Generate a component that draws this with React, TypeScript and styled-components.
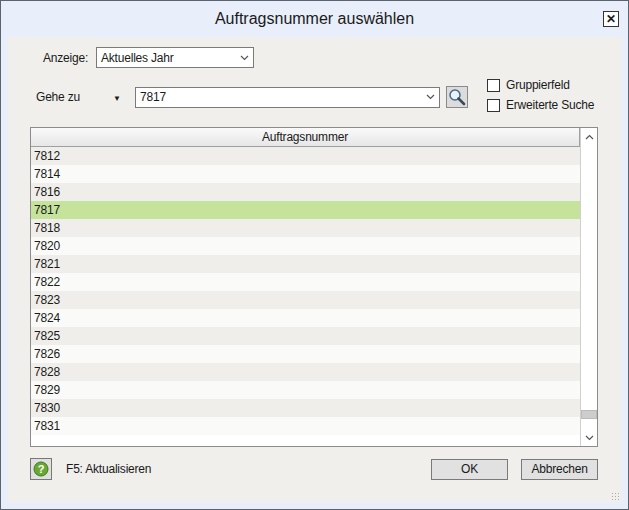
import React from 'react'
import styled, { createGlobalStyle } from 'styled-components'

const Global = createGlobalStyle`
  body { margin: 0; font-family: "Liberation Sans", Arial, sans-serif; font-size: 12px; letter-spacing: -0.2px; color: #1a1a1a; }
`
const Frame = styled.div`
  width: 629px; height: 510px; box-sizing: border-box;
  border: 1px solid #5a6270; background: #e8eefa;
  display: flex; flex-direction: column; padding: 0 7px 7px 7px;
`
const TitleBar = styled.div`
  height: 36px; display: flex; align-items: center; justify-content: center; position: relative;
  font-size: 16px; color: #1a1a1a; letter-spacing: 0;
`
const Close = styled.div`
  position: absolute; right: 2px; top: 10px; width: 14px; height: 14px;
  border: 1px solid #333; background: #fff; font-weight: bold; font-size: 12px;
  display: flex; align-items: center; justify-content: center; line-height: 1;
`
const Body = styled.div`
  flex: 1; background: #f0efec; position: relative;
  display: flex; flex-direction: column; padding: 10px 23px 0 22px;
`
const Row = styled.div<{ $h: number; $mt: number }>`
  display: flex; align-items: center; height: ${p => p.$h}px; margin-top: ${p => p.$mt}px;
`
const Label = styled.span<{ $w: number; $pl: number }>`
  width: ${p => p.$w}px; padding-left: ${p => p.$pl}px; box-sizing: border-box; flex-shrink: 0;
`
const Combo = styled.div<{ $w: number }>`
  width: ${p => p.$w}px; height: 21px; box-sizing: border-box; border: 1px solid #7a7a7a; background: #fff;
  display: flex; align-items: center; justify-content: space-between; padding: 0 4px;
`
const Chev = ({ up }: { up?: boolean }) => (
  <svg width="9" height="6" viewBox="0 0 9 6">
    <path d={up ? 'M1 5 L4.5 1.5 L8 5' : 'M1 1 L4.5 4.5 L8 1'} stroke="#555" strokeWidth="1.2" fill="none" />
  </svg>
)
const SearchBtn = styled.div`
  width: 22px; height: 22px; box-sizing: border-box; border: 1px solid #8a8a8a; background: #dcdcdc;
  margin-left: 6px; display: flex; align-items: center; justify-content: center;
`
const Checks = styled.div`
  display: flex; flex-direction: column; gap: 6px; margin-left: 19px; margin-top: -4px;
`
const Check = styled.label`
  display: flex; align-items: center; gap: 6px;
  &::before { content: ''; width: 11px; height: 11px; border: 1px solid #333; background: #fff; }
`
const Grid = styled.div`
  margin-top: 19px; height: 320px; border: 1px solid #8c8c8c; background: #fff; display: flex; box-sizing: border-box;
`
const Main = styled.div` flex: 1; display: flex; flex-direction: column; `
const Header = styled.div`
  height: 18px; border-bottom: 1px solid #a0a0a0; background: linear-gradient(#fafafa, #e6e6e6);
  display: flex; align-items: center; justify-content: center; border-right: 1px solid #a0a0a0;
`
const Cell = styled.div<{ $alt: boolean; $sel: boolean }>`
  height: 18px; line-height: 18px; padding-left: 3px;
  background: ${p => (p.$sel ? '#c5e39a' : p.$alt ? '#efeeea' : '#fafaf8')};
`
const Scroll = styled.div`
  width: 16px; border-left: 1px solid #d0d0d0; display: flex; flex-direction: column; background: #fff;
`
const ScrollBtn = styled.div`
  height: 17px; display: flex; align-items: center; justify-content: center;
`
const Thumb = styled.div` height: 7px; background: #cdcdcd; border: 1px solid #bbb; `
const Footer = styled.div`
  display: flex; align-items: center; margin-top: 11px; height: 22px;
`
const Help = styled.div`
  width: 22px; height: 22px; box-sizing: border-box; border: 1px solid #777; background: #e0e0e0;
  display: flex; align-items: center; justify-content: center;
`
const Button = styled.div<{ $ml: number }>`
  width: 77px; height: 21px; box-sizing: border-box; border: 1px solid #7a7a7a; background: #e1e1e1;
  display: flex; align-items: center; justify-content: center; margin-left: ${p => p.$ml}px;
`
const Grip = styled.div`
  position: absolute; right: 2px; bottom: 2px; width: 8px; height: 8px;
  background-image: radial-gradient(#aaa 1px, transparent 1px); background-size: 3px 3px;
`

const rows = ['7812', '7814', '7816', '7817', '7818', '7820', '7821', '7822', '7823', '7824', '7825', '7826', '7828', '7829', '7830', '7831']

export default function App() {
  return (
    <>
      <Global />
      <Frame>
        <TitleBar>
          Auftragsnummer auswählen
          <Close>✕</Close>
        </TitleBar>
        <Body>
          <Row $h={21} $mt={0}>
            <Label $w={66} $pl={13}>Anzeige:</Label>
            <Combo $w={158}><span>Aktuelles Jahr</span><Chev /></Combo>
          </Row>
          <Row $h={22} $mt={18}>
            <Label $w={105} $pl={6}>Gehe zu <span style={{ marginLeft: 30, fontSize: 8 }}>▼</span></Label>
            <Combo $w={305}><span>7817</span><Chev /></Combo>
            <SearchBtn>
              <svg width="18" height="18" viewBox="0 0 18 18">
                <circle cx="7" cy="7" r="5" fill="#eaf4fb" stroke="#4a6a8a" strokeWidth="1.5" />
                <path d="M10.5 10.5 L16 16" stroke="#3a4a5a" strokeWidth="2.5" strokeLinecap="round" />
              </svg>
            </SearchBtn>
            <Checks>
              <Check>Gruppierfeld</Check>
              <Check>Erweiterte Suche</Check>
            </Checks>
          </Row>
          <Grid>
            <Main>
              <Header>Auftragsnummer</Header>
              {rows.map((r, i) => (
                <Cell key={r} $alt={i % 2 === 0} $sel={r === '7817'}>{r}</Cell>
              ))}
            </Main>
            <Scroll>
              <ScrollBtn><Chev up /></ScrollBtn>
              <div style={{ flex: 1 }} />
              <Thumb />
              <div style={{ height: 10 }} />
              <ScrollBtn><Chev /></ScrollBtn>
            </Scroll>
          </Grid>
          <Footer>
            <Help>
              <svg width="16" height="16" viewBox="0 0 16 16">
                <circle cx="8" cy="8" r="7" fill="#6aa834" stroke="#3f7a1c" />
                <text x="8" y="12" fontSize="11" fontWeight="bold" fill="#fff" textAnchor="middle" fontFamily="Liberation Sans">?</text>
              </svg>
            </Help>
            <span style={{ marginLeft: 14 }}>F5: Aktualisieren</span>
            <div style={{ flex: 1 }} />
            <Button $ml={0}>OK</Button>
            <Button $ml={13}>Abbrechen</Button>
          </Footer>
          <Grip />
        </Body>
      </Frame>
    </>
  )
}
